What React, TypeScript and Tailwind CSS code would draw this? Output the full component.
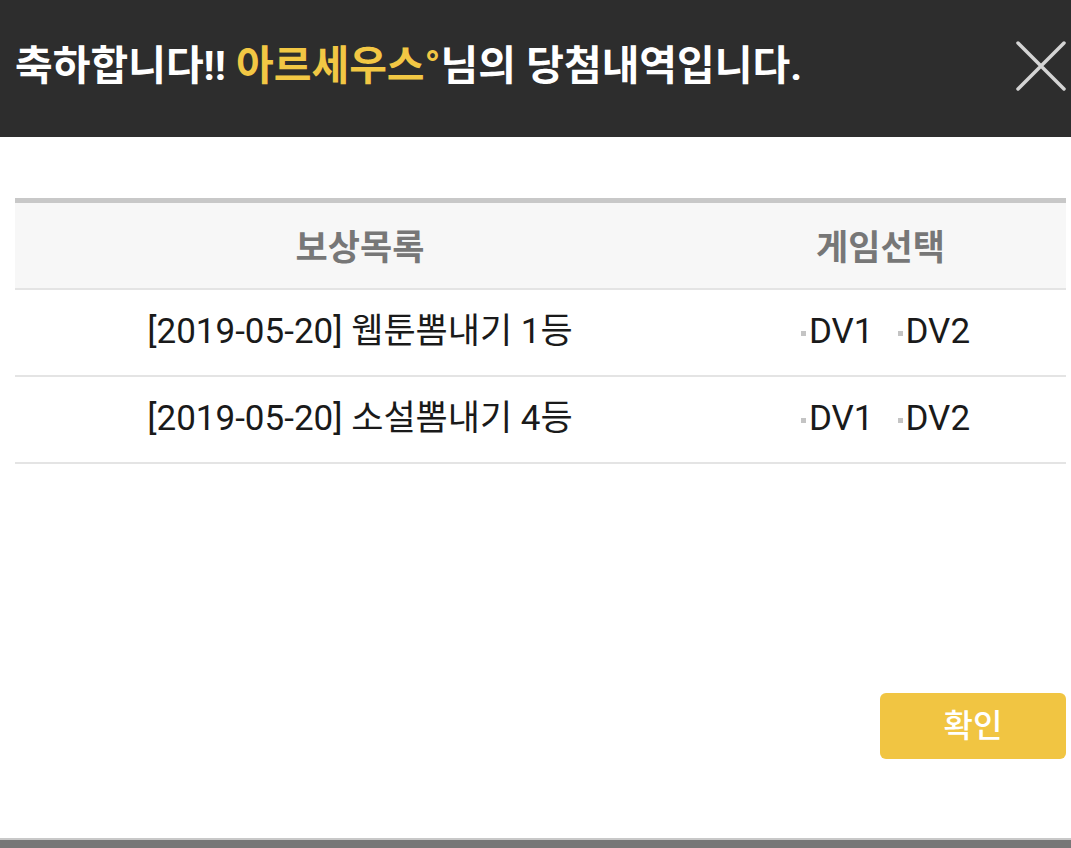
const FONT = "font-['Roboto','Noto_Sans_CJK_KR',sans-serif]"

const rows = [
  { title: '[2019-05-20] 웹툰뽐내기 1등' },
  { title: '[2019-05-20] 소설뽐내기 4등' },
]

function GameOption({ label }: { label: string }) {
  return (
    <span className="inline-flex items-center">
      <span className="w-[5px] h-[5px] bg-[#c4c4c4] mr-[3px] mt-[2px]" />
      {label}
    </span>
  )
}

export default function App() {
  return (
    <div className={`h-[848px] w-full flex flex-col bg-white ${FONT}`}>
      <header className="h-[137px] bg-[#2d2d2d] flex items-center justify-between pl-[15px] pr-[5px]">
        <h1 className="text-[41px] font-bold text-white tracking-[0px] pb-[4px]">
          축하합니다!! <span className="text-[#f2c744]">아르세우스°</span>님의 당첨내역입니다.
        </h1>
        <button aria-label="close" className="w-[50px] h-[50px] mb-[6px]">
          <svg viewBox="0 0 50 50" width="50" height="50">
            <path d="M2 2 L48 48 M48 2 L2 48" stroke="#d4d4d4" strokeWidth="3.5" strokeLinecap="round" />
          </svg>
        </button>
      </header>

      <main className="flex-1 flex flex-col pl-[15px] pr-[5px] pt-[61px]">
        <div className="border-t-[5px] border-[#c8c8c8]">
          <div className="grid grid-cols-[690px_1fr] h-[87px] bg-[#f7f7f7] border-b-[2px] border-[#e4e4e4] items-center text-center text-[35px] font-bold text-[#777] pt-[8px]">
            <div>보상목록</div>
            <div className="pr-[10px]">게임선택</div>
          </div>
          {rows.map((r, i) => (
            <div
              key={i}
              className="grid grid-cols-[690px_1fr] h-[87px] border-b-[2px] border-[#e4e4e4] items-center text-center text-[35px] text-[#1a1a1a]"
            >
              <div>{r.title}</div>
              <div className="flex justify-center gap-[24px]">
                <GameOption label="DV1" />
                <GameOption label="DV2" />
              </div>
            </div>
          ))}
        </div>

        <div className="flex justify-end mt-[229px]">
          <button className="w-[186px] h-[66px] rounded-[6px] bg-[#f1c542] text-white text-[32px] font-medium">
            확인
          </button>
        </div>
      </main>

      <footer className="h-[10px] bg-[#777] border-t-[2px] border-[#c8c8c8]" />
    </div>
  )
}
